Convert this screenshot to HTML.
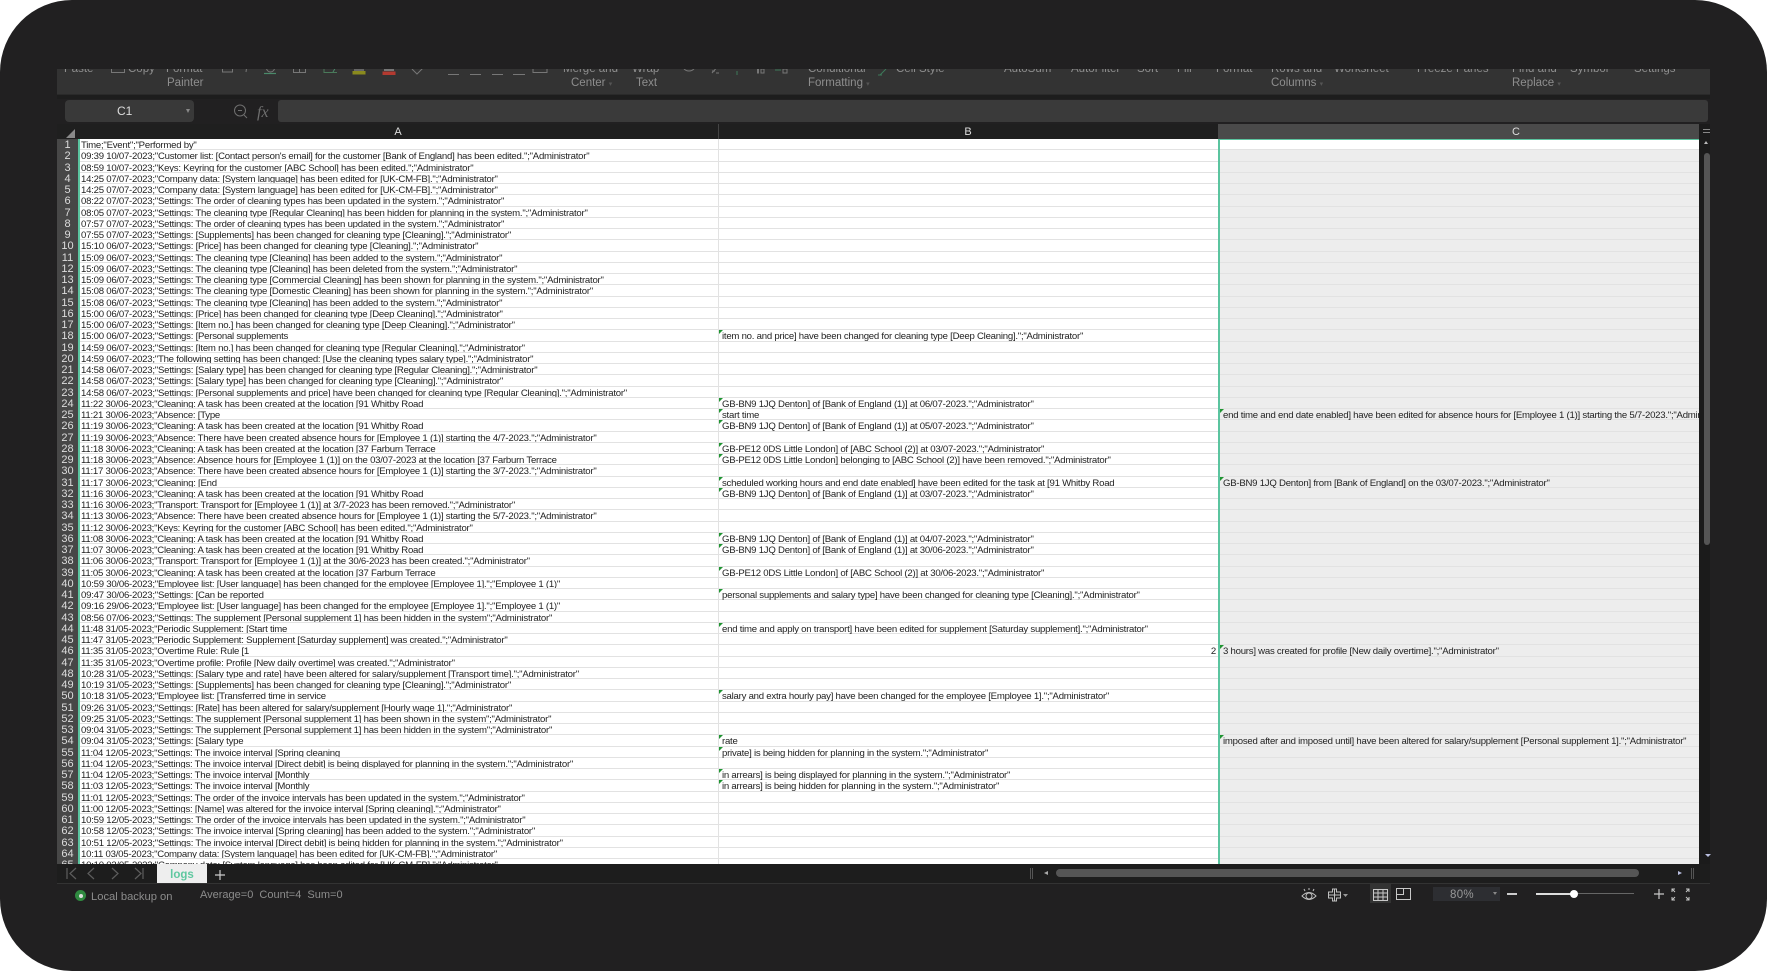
<!DOCTYPE html>
<html><head><meta charset="utf-8"><title>logs</title>
<style>
html,body{margin:0;padding:0;background:#fff;width:1767px;height:971px;overflow:hidden}
*{box-sizing:border-box}
body{font-family:"Liberation Sans",sans-serif}
#f{position:absolute;left:0;top:0;width:1767px;height:971px;background:#212021;border-radius:72px;overflow:hidden}
.abs,#rb span,#rb svg{position:absolute}
#rb{position:absolute;left:57px;top:69px;width:1653px;height:26px;background:#333;border-bottom:1px solid #2a2a2a;overflow:hidden;color:#8e8e8e;font-size:11.5px;line-height:14px;white-space:nowrap}
#rb span{top:-7px}
#rb span.l2{top:7px}
#g{position:absolute;left:57px;top:139px;width:1642px;height:725px;background:#fff;overflow:hidden;color:#1f1f1f;font-size:9.6px;line-height:11px;letter-spacing:-.24px;filter:blur(.3px)}
.r{position:relative;height:11.25px;border-bottom:1px solid #e2e2e2;white-space:nowrap}
.r i{position:absolute;left:0;top:0;width:21px;height:11.25px;background:#474747;color:#ddd;font-style:normal;font-size:11px;text-align:center;line-height:12px;letter-spacing:0;overflow:hidden}
.r span{position:absolute;top:1px;overflow:hidden;height:9.5px}
.r .a{left:24px;width:636px}
.r .b{left:665px;width:495px}
.r .c{left:1166px;width:476px}
.bg{position:absolute;left:1161px;top:0;width:481px;height:725px;background:#ededed}
.t:before{content:"";position:absolute;left:-4px;top:-1px;border-top:5px solid #1f9431;border-right:5px solid transparent}
.r span.t{overflow:visible}
.hd{position:absolute;top:125px;height:15px;color:#ddd;font-size:11px;line-height:15px;text-align:center}
</style></head><body>
<div id="f">
<div id="rb">
<span style="left:7px">Paste</span>
<span style="left:71px">Copy</span>
<span style="left:109px">Format</span><span class="l2" style="left:110px">Painter</span>
<span style="left:506px">Merge and</span><span class="l2" style="left:514px">Center <small style="font-size:7px;color:#555">▾</small></span>
<span style="left:575px">Wrap</span><span class="l2" style="left:579px">Text</span>
<span style="left:751px">Conditional</span><span class="l2" style="left:751px">Formatting <small style="font-size:7px;color:#555">▾</small></span>
<span style="left:839px">Cell Style</span>
<span style="left:947px">AutoSum</span>
<span style="left:1014px">AutoFilter</span>
<span style="left:1080px">Sort</span>
<span style="left:1120px">Fill</span>
<span style="left:1159px">Format</span>
<span style="left:1214px">Rows and</span><span class="l2" style="left:1214px">Columns <small style="font-size:7px;color:#555">▾</small></span>
<span style="left:1277px">Worksheet</span>
<span style="left:1360px">Freeze Panes</span>
<span style="left:1455px">Find and</span><span class="l2" style="left:1455px">Replace <small style="font-size:7px;color:#555">▾</small></span>
<span style="left:1513px">Symbol</span>
<span style="left:1577px">Settings</span>
<svg style="left:0;top:0" width="1653" height="12" fill="none" stroke="#777" stroke-width="1">
<path d="M54.500-4v7.500h13V-4M165.500-4v7h10V-4M190-4l-1 7"/>
<path d="M209.500-4V-1a4 4 0 0 0 8 0V-4"/>
<path d="M207 4.500h12" stroke="#4a8a6a" stroke-width="1.200"/>
<path d="M236.500-4v7.500h12V-4M242.500-4v7.500"/>
<path d="M267-4v7.500h13" stroke="#4a7a5a"/>
<path d="M276 3l4-7" stroke="#4a8a6a"/>
<path d="M297 -1h10v3h-10z" fill="#666" stroke="none"/>
<path d="M295.500 2h13v3.500h-13z" fill="#8a8a1e" stroke="none"/>
<path d="M327-1h10v3h-10z" fill="#777" stroke="none"/>
<path d="M325.500 2.500h13v3.500h-13z" fill="#b33a30" stroke="none"/>
<path d="M355 0l5 5 6-6" />
<path d="M391 5.500h11M413 5.500h11M435 5.500h11M456 5.500h12M476-4v7.500h14V-4"/>
<path d="M626-2a6.500 6.500 0 0 0 12 0"/>
<path d="M655 4l7-8M655 2h3M659 4h3" stroke="#777"/>
<path d="M680 2v4" stroke="#3d7a5a"/>
<path d="M700.500 0h1v4h-1zM704 0h3v4h-3z"/>
<path d="M718 1h6" stroke="#3d7a5a"/>
<path d="M726 0h4v4h-4z"/>
<path d="M823 6l6-6M821 6h4" stroke="#3d7a5a"/>
</svg>
</div>
<div class="abs" style="left:57px;top:95px;width:1653px;height:4px;background:#1d1d1d"></div>
<div class="abs" style="left:65px;top:100px;width:129px;height:22px;background:#393939;border-radius:4px;color:#ddd;font-size:12px;line-height:23px;padding-left:52px">C1</div>
<div class="abs" style="left:186px;top:109px;border-top:4px solid #888;border-left:2.500px solid transparent;border-right:2.500px solid transparent"></div>
<svg class="abs" style="left:232px;top:102px" width="40" height="20" fill="none" stroke="#6f6f6f">
<circle cx="8" cy="8.500" r="5.500"/><path d="M12 13l3 3M6 8.500h4" /><text x="25" y="15" font-family="Liberation Serif" font-style="italic" font-size="16" fill="#6f6f6f" stroke="none">fx</text>
</svg>
<div class="abs" style="left:278px;top:100px;width:1430px;height:22px;background:#3a3a3a;border-radius:3px"></div>

<div class="abs" style="left:57px;top:124px;width:1642px;height:15px;background:#1f1f1f"></div>
<div class="abs" style="left:1218px;top:124px;width:481px;height:15px;background:#4a4a4a"></div>
<div class="abs" style="left:718px;top:124px;width:1px;height:15px;background:#444"></div>
<div class="hd" style="left:388px;width:20px">A</div>
<div class="hd" style="left:958px;width:20px">B</div>
<div class="hd" style="left:1506px;width:20px">C</div>
<svg class="abs" style="left:66px;top:129px" width="10" height="9"><path d="M9 0v9H0z" fill="#8a8a8a"/></svg>

<div id="g">
<div class="bg"></div>
<div class="abs" style="left:1161px;top:0;width:481px;height:11.250px;background:#fff"></div>
<div class="abs" style="left:661px;top:0;width:1px;height:725px;background:#e2e2e2;z-index:2"></div>
<div class="abs" style="left:21px;top:0;width:2px;height:725px;background:#5bc49f;z-index:3"></div>
<div class="abs" style="left:1161px;top:0;width:2px;height:725px;background:#5bc49f;z-index:3"></div>
<div class="abs" style="left:1161px;top:0;width:481px;height:1px;background:#5bc49f;z-index:3"></div>
<div class="r"><i>1</i><span class="a">Time;"Event";"Performed by"</span></div>
<div class="r"><i>2</i><span class="a">09:39 10/07-2023;"Customer list: [Contact person's email] for the customer [Bank of England] has been edited.";"Administrator"</span></div>
<div class="r"><i>3</i><span class="a">08:59 10/07-2023;"Keys: Keyring for the customer [ABC School] has been edited.";"Administrator"</span></div>
<div class="r"><i>4</i><span class="a">14:25 07/07-2023;"Company data: [System language] has been edited for [UK-CM-FB].";"Administrator"</span></div>
<div class="r"><i>5</i><span class="a">14:25 07/07-2023;"Company data: [System language] has been edited for [UK-CM-FB].";"Administrator"</span></div>
<div class="r"><i>6</i><span class="a">08:22 07/07-2023;"Settings: The order of cleaning types has been updated in the system.";"Administrator"</span></div>
<div class="r"><i>7</i><span class="a">08:05 07/07-2023;"Settings: The cleaning type [Regular Cleaning] has been hidden for planning in the system.";"Administrator"</span></div>
<div class="r"><i>8</i><span class="a">07:57 07/07-2023;"Settings: The order of cleaning types has been updated in the system.";"Administrator"</span></div>
<div class="r"><i>9</i><span class="a">07:55 07/07-2023;"Settings: [Supplements] has been changed for cleaning type [Cleaning].";"Administrator"</span></div>
<div class="r"><i>10</i><span class="a">15:10 06/07-2023;"Settings: [Price] has been changed for cleaning type [Cleaning].";"Administrator"</span></div>
<div class="r"><i>11</i><span class="a">15:09 06/07-2023;"Settings: The cleaning type [Cleaning] has been added to the system.";"Administrator"</span></div>
<div class="r"><i>12</i><span class="a">15:09 06/07-2023;"Settings: The cleaning type [Cleaning] has been deleted from the system.";"Administrator"</span></div>
<div class="r"><i>13</i><span class="a">15:09 06/07-2023;"Settings: The cleaning type [Commercial Cleaning] has been shown for planning in the system.";"Administrator"</span></div>
<div class="r"><i>14</i><span class="a">15:08 06/07-2023;"Settings: The cleaning type [Domestic Cleaning] has been shown for planning in the system.";"Administrator"</span></div>
<div class="r"><i>15</i><span class="a">15:08 06/07-2023;"Settings: The cleaning type [Cleaning] has been added to the system.";"Administrator"</span></div>
<div class="r"><i>16</i><span class="a">15:00 06/07-2023;"Settings: [Price] has been changed for cleaning type [Deep Cleaning].";"Administrator"</span></div>
<div class="r"><i>17</i><span class="a">15:00 06/07-2023;"Settings: [Item no.] has been changed for cleaning type [Deep Cleaning].";"Administrator"</span></div>
<div class="r"><i>18</i><span class="a">15:00 06/07-2023;"Settings: [Personal supplements</span><span class="b t">item no. and price] have been changed for cleaning type [Deep Cleaning].";"Administrator"</span></div>
<div class="r"><i>19</i><span class="a">14:59 06/07-2023;"Settings: [Item no.] has been changed for cleaning type [Regular Cleaning].";"Administrator"</span></div>
<div class="r"><i>20</i><span class="a">14:59 06/07-2023;"The following setting has been changed: [Use the cleaning types salary type].";"Administrator"</span></div>
<div class="r"><i>21</i><span class="a">14:58 06/07-2023;"Settings: [Salary type] has been changed for cleaning type [Regular Cleaning].";"Administrator"</span></div>
<div class="r"><i>22</i><span class="a">14:58 06/07-2023;"Settings: [Salary type] has been changed for cleaning type [Cleaning].";"Administrator"</span></div>
<div class="r"><i>23</i><span class="a">14:58 06/07-2023;"Settings: [Personal supplements and price] have been changed for cleaning type [Regular Cleaning].";"Administrator"</span></div>
<div class="r"><i>24</i><span class="a">11:22 30/06-2023;"Cleaning: A task has been created at the location [91 Whitby Road</span><span class="b t">GB-BN9 1JQ Denton] of [Bank of England (1)] at 06/07-2023.";"Administrator"</span></div>
<div class="r"><i>25</i><span class="a">11:21 30/06-2023;"Absence: [Type</span><span class="b t">start time</span><span class="c t">end time and end date enabled] have been edited for absence hours for [Employee 1 (1)] starting the 5/7-2023.";"Administrator"</span></div>
<div class="r"><i>26</i><span class="a">11:19 30/06-2023;"Cleaning: A task has been created at the location [91 Whitby Road</span><span class="b t">GB-BN9 1JQ Denton] of [Bank of England (1)] at 05/07-2023.";"Administrator"</span></div>
<div class="r"><i>27</i><span class="a">11:19 30/06-2023;"Absence: There have been created absence hours for [Employee 1 (1)] starting the 4/7-2023.";"Administrator"</span></div>
<div class="r"><i>28</i><span class="a">11:18 30/06-2023;"Cleaning: A task has been created at the location [37 Farburn Terrace</span><span class="b t">GB-PE12 0DS Little London] of [ABC School (2)] at 03/07-2023.";"Administrator"</span></div>
<div class="r"><i>29</i><span class="a">11:18 30/06-2023;"Absence: Absence hours for [Employee 1 (1)] on the 03/07-2023 at the location [37 Farburn Terrace</span><span class="b t">GB-PE12 0DS Little London] belonging to [ABC School (2)] have been removed.";"Administrator"</span></div>
<div class="r"><i>30</i><span class="a">11:17 30/06-2023;"Absence: There have been created absence hours for [Employee 1 (1)] starting the 3/7-2023.";"Administrator"</span></div>
<div class="r"><i>31</i><span class="a">11:17 30/06-2023;"Cleaning: [End</span><span class="b t">scheduled working hours and end date enabled] have been edited for the task at [91 Whitby Road</span><span class="c t">GB-BN9 1JQ Denton] from [Bank of England] on the 03/07-2023.";"Administrator"</span></div>
<div class="r"><i>32</i><span class="a">11:16 30/06-2023;"Cleaning: A task has been created at the location [91 Whitby Road</span><span class="b t">GB-BN9 1JQ Denton] of [Bank of England (1)] at 03/07-2023.";"Administrator"</span></div>
<div class="r"><i>33</i><span class="a">11:16 30/06-2023;"Transport: Transport for [Employee 1 (1)] at 3/7-2023 has been removed.";"Administrator"</span></div>
<div class="r"><i>34</i><span class="a">11:13 30/06-2023;"Absence: There have been created absence hours for [Employee 1 (1)] starting the 5/7-2023.";"Administrator"</span></div>
<div class="r"><i>35</i><span class="a">11:12 30/06-2023;"Keys: Keyring for the customer [ABC School] has been edited.";"Administrator"</span></div>
<div class="r"><i>36</i><span class="a">11:08 30/06-2023;"Cleaning: A task has been created at the location [91 Whitby Road</span><span class="b t">GB-BN9 1JQ Denton] of [Bank of England (1)] at 04/07-2023.";"Administrator"</span></div>
<div class="r"><i>37</i><span class="a">11:07 30/06-2023;"Cleaning: A task has been created at the location [91 Whitby Road</span><span class="b t">GB-BN9 1JQ Denton] of [Bank of England (1)] at 30/06-2023.";"Administrator"</span></div>
<div class="r"><i>38</i><span class="a">11:06 30/06-2023;"Transport: Transport for [Employee 1 (1)] at the 30/6-2023 has been created.";"Administrator"</span></div>
<div class="r"><i>39</i><span class="a">11:05 30/06-2023;"Cleaning: A task has been created at the location [37 Farburn Terrace</span><span class="b t">GB-PE12 0DS Little London] of [ABC School (2)] at 30/06-2023.";"Administrator"</span></div>
<div class="r"><i>40</i><span class="a">10:59 30/06-2023;"Employee list: [User language] has been changed for the employee [Employee 1].";"Employee 1 (1)"</span></div>
<div class="r"><i>41</i><span class="a">09:47 30/06-2023;"Settings: [Can be reported</span><span class="b t">personal supplements and salary type] have been changed for cleaning type [Cleaning].";"Administrator"</span></div>
<div class="r"><i>42</i><span class="a">09:16 29/06-2023;"Employee list: [User language] has been changed for the employee [Employee 1].";"Employee 1 (1)"</span></div>
<div class="r"><i>43</i><span class="a">08:56 07/06-2023;"Settings: The supplement [Personal supplement 1] has been hidden in the system";"Administrator"</span></div>
<div class="r"><i>44</i><span class="a">11:48 31/05-2023;"Periodic Supplement: [Start time</span><span class="b t">end time and apply on transport] have been edited for supplement [Saturday supplement].";"Administrator"</span></div>
<div class="r"><i>45</i><span class="a">11:47 31/05-2023;"Periodic Supplement: Supplement [Saturday supplement] was created.";"Administrator"</span></div>
<div class="r"><i>46</i><span class="a">11:35 31/05-2023;"Overtime Rule: Rule [1</span><span class="b" style="text-align:right;width:494px">2</span><span class="c t">3 hours] was created for profile [New daily overtime].";"Administrator"</span></div>
<div class="r"><i>47</i><span class="a">11:35 31/05-2023;"Overtime profile: Profile [New daily overtime] was created.";"Administrator"</span></div>
<div class="r"><i>48</i><span class="a">10:28 31/05-2023;"Settings: [Salary type and rate] have been altered for salary/supplement [Transport time].";"Administrator"</span></div>
<div class="r"><i>49</i><span class="a">10:19 31/05-2023;"Settings: [Supplements] has been changed for cleaning type [Cleaning].";"Administrator"</span></div>
<div class="r"><i>50</i><span class="a">10:18 31/05-2023;"Employee list: [Transferred time in service</span><span class="b t">salary and extra hourly pay] have been changed for the employee [Employee 1].";"Administrator"</span></div>
<div class="r"><i>51</i><span class="a">09:26 31/05-2023;"Settings: [Rate] has been altered for salary/supplement [Hourly wage 1].";"Administrator"</span></div>
<div class="r"><i>52</i><span class="a">09:25 31/05-2023;"Settings: The supplement [Personal supplement 1] has been shown in the system";"Administrator"</span></div>
<div class="r"><i>53</i><span class="a">09:04 31/05-2023;"Settings: The supplement [Personal supplement 1] has been hidden in the system";"Administrator"</span></div>
<div class="r"><i>54</i><span class="a">09:04 31/05-2023;"Settings: [Salary type</span><span class="b t">rate</span><span class="c t">imposed after and imposed until] have been altered for salary/supplement [Personal supplement 1].";"Administrator"</span></div>
<div class="r"><i>55</i><span class="a">11:04 12/05-2023;"Settings: The invoice interval [Spring cleaning</span><span class="b t">private] is being hidden for planning in the system.";"Administrator"</span></div>
<div class="r"><i>56</i><span class="a">11:04 12/05-2023;"Settings: The invoice interval [Direct debit] is being displayed for planning in the system.";"Administrator"</span></div>
<div class="r"><i>57</i><span class="a">11:04 12/05-2023;"Settings: The invoice interval [Monthly</span><span class="b t">in arrears] is being displayed for planning in the system.";"Administrator"</span></div>
<div class="r"><i>58</i><span class="a">11:03 12/05-2023;"Settings: The invoice interval [Monthly</span><span class="b t">in arrears] is being hidden for planning in the system.";"Administrator"</span></div>
<div class="r"><i>59</i><span class="a">11:01 12/05-2023;"Settings: The order of the invoice intervals has been updated in the system.";"Administrator"</span></div>
<div class="r"><i>60</i><span class="a">11:00 12/05-2023;"Settings: [Name] was altered for the invoice interval [Spring cleaning].";"Administrator"</span></div>
<div class="r"><i>61</i><span class="a">10:59 12/05-2023;"Settings: The order of the invoice intervals has been updated in the system.";"Administrator"</span></div>
<div class="r"><i>62</i><span class="a">10:58 12/05-2023;"Settings: The invoice interval [Spring cleaning] has been added to the system.";"Administrator"</span></div>
<div class="r"><i>63</i><span class="a">10:51 12/05-2023;"Settings: The invoice interval [Direct debit] is being hidden for planning in the system.";"Administrator"</span></div>
<div class="r"><i>64</i><span class="a">10:11 03/05-2023;"Company data: [System language] has been edited for [UK-CM-FB].";"Administrator"</span></div>
<div class="r"><i>65</i><span class="a">10:10 03/05-2023;"Company data: [System language] has been edited for [UK-CM-FB].";"Administrator"</span></div>
</div>

<!-- vertical scrollbar -->
<div class="abs" style="left:1699px;top:124px;width:11px;height:740px;background:#1b1b1b"></div>
<div class="abs" style="left:1703px;top:129px;width:7px;height:1px;background:#888;box-shadow:0 3px 0 #888"></div>
<div class="abs" style="left:1704px;top:141px;border-bottom:3px solid #bbb;border-left:2.500px solid transparent;border-right:2.500px solid transparent"></div>
<div class="abs" style="left:1704px;top:153px;width:6px;height:392px;background:#555;border-radius:3px"></div>
<div class="abs" style="left:1705px;top:854px;border-top:3px solid #b9bfe0;border-left:3px solid transparent;border-right:3px solid transparent"></div>

<!-- sheet bar -->
<div class="abs" style="left:57px;top:864px;width:1653px;height:19px;background:#1d1d1d"></div>
<div class="abs" style="left:57px;top:883px;width:1653px;height:1px;background:#333"></div>
<svg class="abs" style="left:64px;top:866px" width="84" height="15" fill="none" stroke="#5d5d5d" stroke-width="1.200">
<path d="M3 2v11M12 2L6 7.500l6 5.500M30 2L24 7.500l6 5.500M48 2l6 5.500L48 13M71 2l6 5.500L71 13M79 2v11"/>
</svg>
<div class="abs" style="left:157px;top:864px;width:50px;height:19px;background:#eee;color:#5fc8a0;font-weight:bold;font-size:11.5px;line-height:23px;text-align:center">logs</div>
<svg class="abs" style="left:214px;top:869px" width="12" height="12" stroke="#ccc" stroke-width="1.200"><path d="M1 6h10M6 1v10"/></svg>
<div class="abs" style="left:1030px;top:868px;width:3px;height:11px;border-left:1px solid #555;border-right:1px solid #555"></div>
<div class="abs" style="left:1044px;top:871px;border-right:4px solid #aaa;border-top:2.500px solid transparent;border-bottom:2.500px solid transparent"></div>
<div class="abs" style="left:1056px;top:869px;width:583px;height:8px;background:#555;border-radius:4px"></div>
<div class="abs" style="left:1678px;top:871px;border-left:4px solid #b9bfe0;border-top:2.500px solid transparent;border-bottom:2.500px solid transparent"></div>
<div class="abs" style="left:1691px;top:868px;width:3px;height:11px;border-left:1px solid #555;border-right:1px solid #555"></div>

<!-- status bar -->
<div class="abs" style="left:75px;top:890px;width:11px;height:11px;background:#2f8a40;border-radius:50%"></div>
<div class="abs" style="left:78.500px;top:893.500px;width:4px;height:4px;background:#ddd;border-radius:50%"></div>
<div class="abs" style="left:91px;top:890px;color:#8c8c8c;font-size:11.2px;line-height:14px;white-space:nowrap">Local backup on</div>
<div class="abs" style="left:200px;top:888px;color:#8c8c8c;font-size:11px;line-height:14px;white-space:pre">Average=0  Count=4  Sum=0</div>

<svg class="abs" style="left:1296px;top:885px" width="60" height="20" fill="none" stroke="#c0c0c0" stroke-width="1">
<path d="M6 11q7-7 14 0q-7 7-14 0z"/><circle cx="13" cy="11" r="3"/><path d="M8 4l1 2M13 3v2M18 4l-1 2"/>
<path d="M32.500 7h4V4h4v3h4v6h-4v3h-4v-3h-4zM38.500 4v12M32.500 10h12"/>
<path d="M47 9h5l-2.500 3z" fill="#999" stroke="none"/>
</svg>
<div class="abs" style="left:1370px;top:884px;width:21px;height:19px;background:#333"></div>
<svg class="abs" style="left:1371px;top:887px" width="44" height="16" fill="none" stroke="#c8c8c8" stroke-width="1">
<path d="M2.500 2.500h14v11h-14zM2.500 6h14M2.500 10h14M7 2.500v11M12 2.500v11"/>
<path d="M25.500 1.500h14v11h-14zM32.500 1.500v6h-7"/>
</svg>
<div class="abs" style="left:1433px;top:887px;width:67px;height:14px;background:#2d2e32;color:#999;font-size:11.5px;line-height:17px;padding-left:17px;letter-spacing:.3px;overflow:hidden">80%</div>
<div class="abs" style="left:1493px;top:892px;border-top:3px solid #888;border-left:2.500px solid transparent;border-right:2.500px solid transparent"></div>
<div class="abs" style="left:1507px;top:893px;width:10px;height:1.500px;background:#ccc"></div>
<div class="abs" style="left:1536px;top:893px;width:38px;height:1.500px;background:#ddd"></div>
<div class="abs" style="left:1574px;top:893px;width:60px;height:1px;background:#666"></div>
<div class="abs" style="left:1570px;top:890px;width:8px;height:8px;background:#fff;border-radius:50%"></div>
<svg class="abs" style="left:1653px;top:888px" width="46" height="14" fill="none" stroke="#c8c8c8" stroke-width="1.200">
<path d="M1 6h10M6 1v10"/>
<path d="M22 1h-3v3M19 1l3 3M33 1h3v3M36 1l-3 3M19 9v3h3M19 12l3-3M36 9v3h-3M36 12l-3-3" stroke-width="1"/>
</svg>
</div>
</body></html>
